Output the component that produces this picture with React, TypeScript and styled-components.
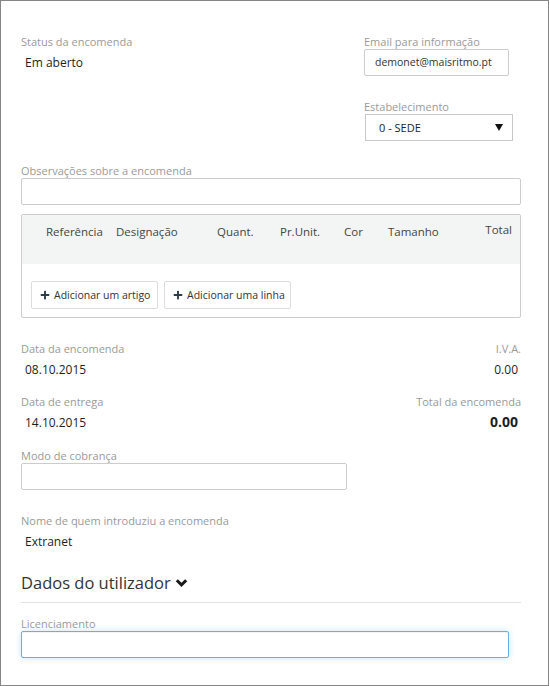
import React from "react";
import styled, { createGlobalStyle } from "styled-components";
import { FaPlus } from "react-icons/fa";

const GlobalStyle = createGlobalStyle`
  html, body {
    margin: 0;
    padding: 0;
    background: #fff;
  }
  body {
    font-family: "Open Sans", "Liberation Sans", sans-serif;
    color: #222;
  }
`;

const StFrame = styled.div`
  box-sizing: border-box;
  width: 549px;
  height: 686px;
  border: 1px solid #858585;
  padding: 34px 27px 0 20px;
  overflow: hidden;
`;

const StTopGrid = styled.div`
  display: grid;
  grid-template-columns: 1fr 157px;
`;

const StRightColumn = styled.div`
  display: flex;
  flex-direction: column;
  gap: 24px;
`;

const StField = styled.div<{ $mt?: number }>`
  display: flex;
  flex-direction: column;
  margin-top: ${(p) => p.$mt ?? 0}px;
`;

const StLabel = styled.div<{ $right?: boolean }>`
  font-size: 11px;
  line-height: 14px;
  color: #9a9a9a;
  text-align: ${(p) => (p.$right ? "right" : "left")};
`;

const StValue = styled.div<{ $right?: boolean; $bold?: boolean }>`
  font-size: ${(p) => (p.$bold ? "14px" : "12px")};
  font-weight: ${(p) => (p.$bold ? 700 : 400)};
  line-height: ${(p) => (p.$bold ? "16px" : "18px")};
  margin-top: 5px;
  color: #1e1e1e;
  padding: ${(p) => (p.$right ? "0 3px 0 0" : "0 0 0 4px")};
  text-align: ${(p) => (p.$right ? "right" : "left")};
`;

const StInput = styled.div<{ $width?: number; $focus?: boolean }>`
  box-sizing: border-box;
  width: ${(p) => (p.$width ? `${p.$width}px` : "100%")};
  height: 27px;
  border: 1px solid ${(p) => (p.$focus ? "#66afe9" : "#cccccc")};
  border-radius: 2px;
  background: #fff;
  font-size: 10.5px;
  line-height: 25px;
  padding: 0 10px;
  color: #333;
  white-space: nowrap;
  box-shadow: ${(p) =>
    p.$focus
      ? "inset 0 1px 1px rgba(0,0,0,.05), 0 0 6px rgba(102,175,233,.35)"
      : "none"};
`;

const StSelect = styled.div`
  box-sizing: border-box;
  width: 148px;
  margin-left: 1px;
  height: 27px;
  border: 1px solid #c8c8c8;
  display: flex;
  align-items: center;
  justify-content: space-between;
  padding: 0 9px 0 13px;
  font-size: 11px;
  color: #222;
  background: #fff;
`;

const StTable = styled.div`
  margin-top: 9px;
  border: 1px solid #cccccc;
  border-radius: 2px;
`;

const StTableHead = styled.div`
  display: grid;
  grid-template-columns: 70px 101px 63px 64px 44px 1fr 40px;
  height: 49px;
  padding: 8px 8px 0 24px;
  box-sizing: border-box;
  background: #f3f5f5;
  font-size: 11.5px;
  line-height: 18px;
  color: #444;
`;

const StHeadCell = styled.div<{ $right?: boolean }>`
  text-align: ${(p) => (p.$right ? "right" : "left")};
  margin-top: ${(p) => (p.$right ? "-2px" : "0")};
  white-space: nowrap;
`;

const StTableBody = styled.div`
  display: flex;
  gap: 6px;
  padding: 17px 9px 8px;
`;

const StButton = styled.button`
  box-sizing: border-box;
  width: 127px;
  height: 28px;
  display: flex;
  align-items: center;
  gap: 4px;
  padding: 0 8px;
  border: 1px solid #dddddd;
  border-radius: 2px;
  background: #fff;
  font-family: inherit;
  font-size: 10.5px;
  white-space: nowrap;
  color: #333;
  cursor: pointer;
  svg {
    color: #2b3c44;
    flex-shrink: 0;
  }
`;

const StSummaryGrid = styled.div`
  display: grid;
  grid-template-columns: 1fr 1fr;
  margin-top: 24px;
  row-gap: 16px;
`;

const StHeading = styled.h2`
  margin: 20px 0 0;
  font-size: 16.5px;
  font-weight: 400;
  line-height: 24px;
  color: #333;
  display: flex;
  align-items: center;
  gap: 4px;
`;

const StDivider = styled.hr`
  margin: 7px 0 0;
  border: 0;
  border-top: 1px solid #e3e3e3;
`;

function ChevronDown() {
  return (
    <svg width="13" height="10" viewBox="0 0 13 10" aria-hidden>
      <path
        d="M1.8 2.2 L6.5 6.9 L11.2 2.2"
        fill="none"
        stroke="#1a1a1a"
        strokeWidth="3"
        strokeLinecap="butt"
        strokeLinejoin="miter"
      />
    </svg>
  );
}

export default function App() {
  return (
    <>
      <GlobalStyle />
      <StFrame>
        <StTopGrid>
          <StField>
            <StLabel>Status da encomenda</StLabel>
            <StValue>Em aberto</StValue>
          </StField>
          <StRightColumn>
            <StField>
              <StLabel>Email para informação</StLabel>
              <StInput $width={145}>demonet@maisritmo.pt</StInput>
            </StField>
            <StField>
              <StLabel>Estabelecimento</StLabel>
              <StSelect>
                <span>0 - SEDE</span>
                <svg width="8" height="7" viewBox="0 0 8 7">
                  <path d="M0 0 H8 L4 7 Z" fill="#111" />
                </svg>
              </StSelect>
            </StField>
          </StRightColumn>
        </StTopGrid>

        <StField $mt={23}>
          <StLabel>Observações sobre a encomenda</StLabel>
          <StInput />
        </StField>

        <StTable>
          <StTableHead>
            <StHeadCell>Referência</StHeadCell>
            <StHeadCell>Designação</StHeadCell>
            <StHeadCell>Quant.</StHeadCell>
            <StHeadCell>Pr.Unit.</StHeadCell>
            <StHeadCell>Cor</StHeadCell>
            <StHeadCell>Tamanho</StHeadCell>
            <StHeadCell $right>Total</StHeadCell>
          </StTableHead>
          <StTableBody>
            <StButton>
              <FaPlus size={10} />
              Adicionar um artigo
            </StButton>
            <StButton>
              <FaPlus size={10} />
              Adicionar uma linha
            </StButton>
          </StTableBody>
        </StTable>

        <StSummaryGrid>
          <StField>
            <StLabel>Data da encomenda</StLabel>
            <StValue>08.10.2015</StValue>
          </StField>
          <StField>
            <StLabel $right>I.V.A.</StLabel>
            <StValue $right>0.00</StValue>
          </StField>
          <StField>
            <StLabel>Data de entrega</StLabel>
            <StValue>14.10.2015</StValue>
          </StField>
          <StField>
            <StLabel $right>Total da encomenda</StLabel>
            <StValue $right $bold>
              0.00
            </StValue>
          </StField>
        </StSummaryGrid>

        <StField $mt={17}>
          <StLabel>Modo de cobrança</StLabel>
          <StInput $width={326} />
        </StField>

        <StField $mt={24}>
          <StLabel>Nome de quem introduziu a encomenda</StLabel>
          <StValue>Extranet</StValue>
        </StField>

        <StHeading>
          Dados do utilizador
          <ChevronDown />
        </StHeading>
        <StDivider />

        <StField $mt={14}>
          <StLabel>Licenciamento</StLabel>
          <StInput $width={488} $focus />
        </StField>
      </StFrame>
    </>
  );
}
